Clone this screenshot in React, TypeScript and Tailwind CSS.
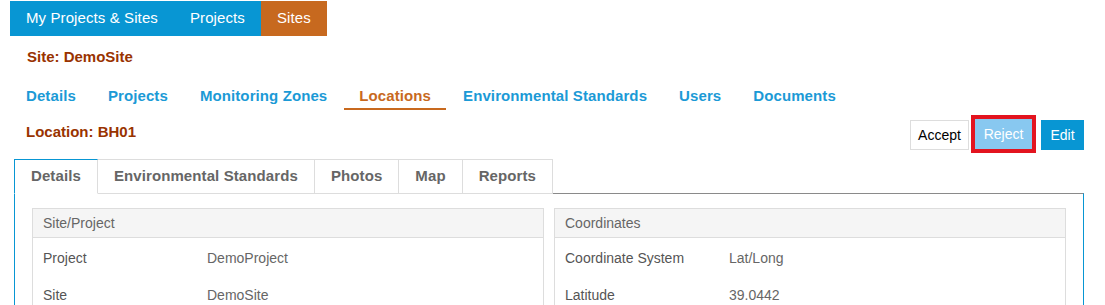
import React from 'react';

interface InfoRow {
  label: string;
  value: string;
}

const topNav = [
  { label: 'My Projects & Sites', active: false },
  { label: 'Projects', active: false },
  { label: 'Sites', active: true },
];

const siteNav = [
  'Details',
  'Projects',
  'Monitoring Zones',
  'Locations',
  'Environmental Standards',
  'Users',
  'Documents',
];

const locationTabs = ['Details', 'Environmental Standards', 'Photos', 'Map', 'Reports'];

const sitePanel: InfoRow[] = [
  { label: 'Project', value: 'DemoProject' },
  { label: 'Site', value: 'DemoSite' },
];

const coordsPanel: InfoRow[] = [
  { label: 'Coordinate System', value: 'Lat/Long' },
  { label: 'Latitude', value: '39.0442' },
];

const Panel: React.FC<{ title: string; rows: InfoRow[] }> = ({ title, rows }) => (
  <div className="border border-[#dddddd] bg-white">
    <div className="h-[29px] flex items-center px-[10px] bg-[#f5f5f5] border-b border-[#dddddd] text-[14px] text-[#666666]">
      {title}
    </div>
    <div className="pt-[2px]">
      {rows.map((row) => (
        <div key={row.label} className="h-[37px] flex items-center px-[10px] text-[14px]">
          <span className="w-[164px] text-[#555555]">{row.label}</span>
          <span className="text-[#666666]">{row.value}</span>
        </div>
      ))}
    </div>
  </div>
);

const App: React.FC = () => {
  return (
    <div className="w-[1105px] h-[305px] overflow-hidden bg-white font-['Liberation_Sans',Arial,sans-serif]">
      {/* Top navigation */}
      <div className="ml-[10px] mt-px flex h-[35px]">
        {topNav.map((item) => (
          <div
            key={item.label}
            className={`px-4 flex items-center text-[15px] tracking-[0.1px] text-white ${
              item.active ? 'bg-[#c7691f]' : 'bg-[#0896d3]'
            }`}
          >
            {item.label}
          </div>
        ))}
      </div>

      <div className="pl-[27px] mt-[12px] text-[15px] leading-[17px] font-bold text-[#993300]">
        Site: DemoSite
      </div>

      {/* Site navigation */}
      <div className="ml-[11px] mt-[14px] flex gap-[2px]">
        {siteNav.map((item) => (
          <div
            key={item}
            className={`px-[15px] pt-[8px] pb-[4px] border-b-2 text-[15px] leading-[17px] font-bold tracking-[0.1px] ${
              item === 'Locations'
                ? 'border-[#c8691e] text-[#c8691e]'
                : 'border-transparent text-[#1b9ad6]'
            }`}
          >
            {item}
          </div>
        ))}
      </div>

      <div className="pl-[14px] pr-[21px]">
        {/* Location header + actions */}
        <div className="mt-[10px] flex items-start justify-between">
          <div className="pl-[12px] pt-[3px] text-[15px] leading-[17px] font-bold text-[#993300]">
            Location: BH01
          </div>
          <div className="flex items-start">
            <button className="h-[30px] w-[59px] border border-[#dddddd] bg-white text-[14px] text-black">
              Accept
            </button>
            <button className="ml-[6px] -mt-px h-[30px] w-[57px] bg-[#88c8f0] text-[14px] text-white outline-4 outline-[#e3141f]">
              Reject
            </button>
            <button className="ml-[9px] h-[30px] w-[43px] bg-[#0896d3] text-[14px] text-white">
              Edit
            </button>
          </div>
        </div>

        {/* Location tabs */}
        <div className="relative mt-[9px] -mb-px flex h-[35px]">
          {locationTabs.map((tab, i) => (
            <div
              key={tab}
              className={`px-4 flex items-center bg-white text-[15px] font-bold tracking-[0.1px] text-[#666666] border-t border-r ${
                i === 0
                  ? 'border-l border-t-[#0896d3] border-l-[#0896d3] border-r-[#dddddd] border-b border-b-white'
                  : 'border-[#dddddd] border-b'
              }`}
            >
              {tab}
            </div>
          ))}
        </div>

        {/* Tab content */}
        <div className="h-[200px] border-t border-t-[#8a8a8a] border-l border-r border-l-[#0896d3] border-r-[#0896d3] px-[17px] pt-[14px]">
          <div className="grid grid-cols-2 gap-[10px]">
            <Panel title="Site/Project" rows={sitePanel} />
            <Panel title="Coordinates" rows={coordsPanel} />
          </div>
        </div>
      </div>
    </div>
  );
};

export default App;
